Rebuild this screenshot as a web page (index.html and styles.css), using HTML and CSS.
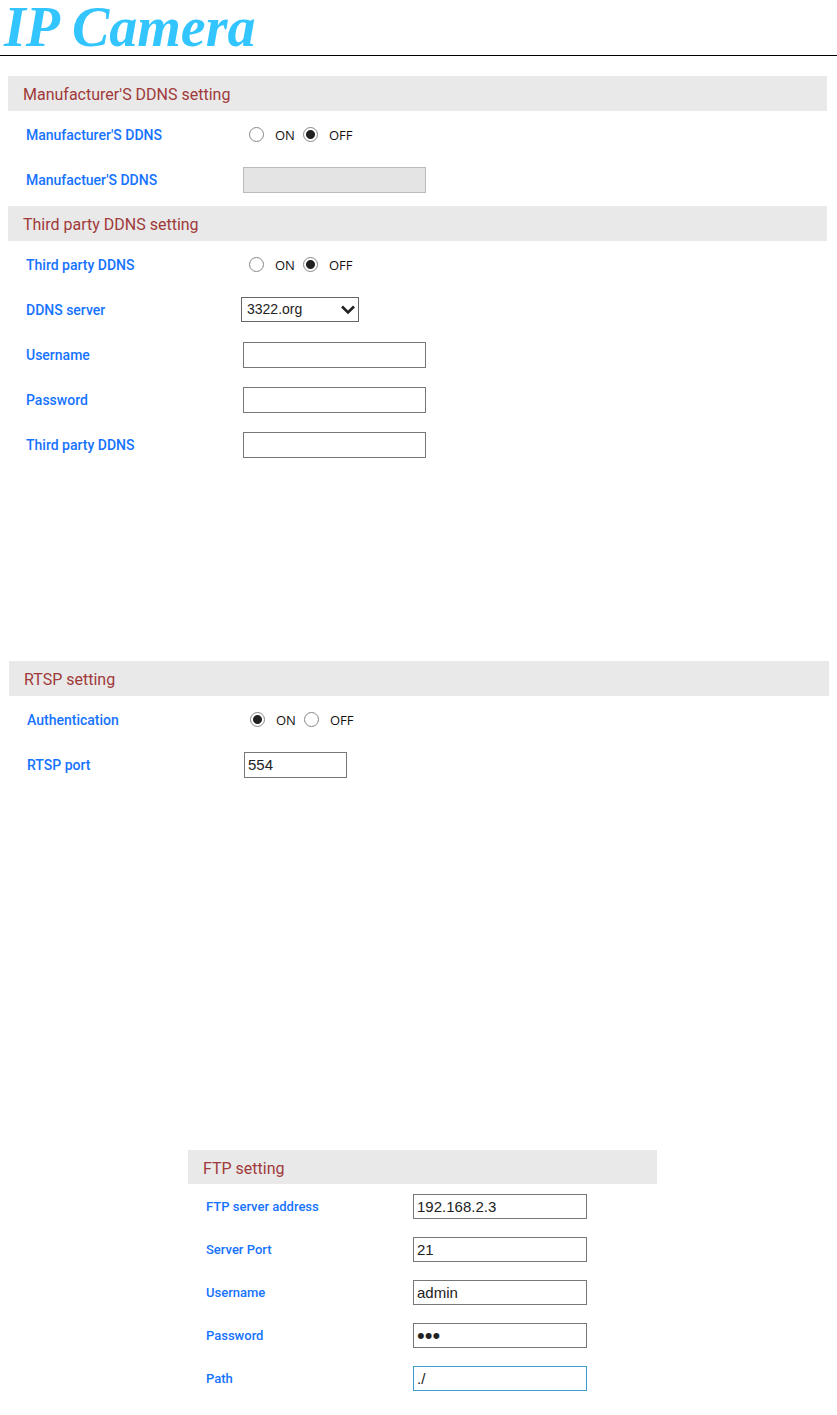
FILE: index.html
```html
<!DOCTYPE html>
<html lang="en">
<head>
    <meta charset="UTF-8">
    <meta name="viewport" content="width=device-width, initial-scale=1.0">
    <title>IP Camera</title>
    <link rel="stylesheet" href="styles.css">
</head>
<body>

<header class="top">
    <div class="logo">IP Camera</div>
</header>

<form class="ddns">
    <section>
        <h2>Manufacturer'S DDNS setting</h2>
        <div class="row" role="radiogroup" aria-labelledby="mddnsLabel">
            <span class="name" id="mddnsLabel">Manufacturer'S DDNS</span>
            <div class="radios">
                <input type="radio" name="mddns" id="mddnsOn"><label for="mddnsOn">ON</label>
                <input type="radio" name="mddns" id="mddnsOff" checked><label for="mddnsOff">OFF</label>
            </div>
        </div>
        <div class="row">
            <label class="name" for="mddnsHost">Manufactuer'S DDNS</label>
            <input type="text" id="mddnsHost" disabled>
        </div>
    </section>

    <section>
        <h2>Third party DDNS setting</h2>
        <div class="row" role="radiogroup" aria-labelledby="tddnsLabel">
            <span class="name" id="tddnsLabel">Third party DDNS</span>
            <div class="radios">
                <input type="radio" name="tddns" id="tddnsOn"><label for="tddnsOn">ON</label>
                <input type="radio" name="tddns" id="tddnsOff" checked><label for="tddnsOff">OFF</label>
            </div>
        </div>
        <div class="row">
            <label class="name" for="ddnsServer">DDNS server</label>
            <div class="select">
                <select id="ddnsServer">
                    <option>3322.org</option>
                </select>
                <svg width="14" height="10" viewBox="0 0 14 10" aria-hidden="true"><path d="M1 1.5 7 7.5 13 1.5" fill="none" stroke="#222" stroke-width="2.6"/></svg>
            </div>
        </div>
        <div class="row">
            <label class="name" for="ddnsUser">Username</label>
            <input type="text" id="ddnsUser">
        </div>
        <div class="row">
            <label class="name" for="ddnsPass">Password</label>
            <input type="password" id="ddnsPass">
        </div>
        <div class="row">
            <label class="name" for="ddnsHost">Third party DDNS</label>
            <input type="text" id="ddnsHost">
        </div>
    </section>
</form>

<form class="rtsp">
    <h2>RTSP setting</h2>
    <div class="row" role="radiogroup" aria-labelledby="authLabel">
        <span class="name" id="authLabel">Authentication</span>
        <div class="radios">
            <input type="radio" name="auth" id="authOn" checked><label for="authOn">ON</label>
            <input type="radio" name="auth" id="authOff"><label for="authOff">OFF</label>
        </div>
    </div>
    <div class="row">
        <label class="name" for="rtspPort">RTSP port</label>
        <input type="text" id="rtspPort" class="port" value="554">
    </div>
</form>

<form class="ftp">
    <h2>FTP setting</h2>
    <div class="row">
        <label class="name" for="ftpServer">FTP server address</label>
        <input type="text" id="ftpServer" value="192.168.2.3">
    </div>
    <div class="row">
        <label class="name" for="ftpPort">Server Port</label>
        <input type="text" id="ftpPort" value="21">
    </div>
    <div class="row">
        <label class="name" for="ftpUser">Username</label>
        <input type="text" id="ftpUser" value="admin">
    </div>
    <div class="row">
        <label class="name" for="ftpPass">Password</label>
        <input type="password" id="ftpPass" value="123">
    </div>
    <div class="row">
        <label class="name" for="ftpPath">Path</label>
        <input type="text" id="ftpPath" class="active" value="./">
    </div>
</form>

</body>
</html>
```
FILE: styles.css
```css
* {
    box-sizing: border-box;
}
body {
    margin: 0;
    background: #fff;
    color: #222;
    font-family: "Liberation Sans", Arial, sans-serif;
    font-size: 14px;
}
.top {
    height: 56px;
    border-bottom: 1px solid #000;
}
.logo {
    padding-left: 4px;
    color: #33c5ff;
    font: italic bold 56px/54px "Liberation Serif", serif;
}
h2 {
    margin: 0 0 1px;
    padding: 1px 15px 0;
    height: 35px;
    line-height: 36px;
    background: #e9e9e9;
    color: #a03a3a;
    font-family: Roboto, sans-serif;
    font-size: 16px;
    font-weight: normal;
}
section {
    margin-bottom: 4px;
}
.ddns {
    margin: 20px 10px 0 8px;
}
.rtsp {
    margin: 194px 8px 0 9px;
}
.ftp {
    width: 56%;
    margin: 363px 0 0 188px;
}
.ftp h2 {
    height: 34px;
}
.row {
    display: flex;
    align-items: center;
    height: 45px;
    padding-left: 18px;
}
.ftp .row {
    height: 43px;
}
.name {
    width: 215px;
    color: #1673ff;
    font-family: Roboto, sans-serif;
    font-size: 14px;
    font-weight: 500;
}
.ftp .name {
    width: 205px;
    font-size: 13px;
}
input[type="text"],
input[type="password"] {
    width: 183px;
    height: 26px;
    margin: 0 0 0 2px;
    padding: 0 3px;
    border: 1px solid #777;
    border-radius: 0;
    background: #fff;
    color: #222;
    font-family: inherit;
    font-size: 15px;
}
input[type="text"]:disabled {
    border-color: #bbb;
    background: #e4e4e4;
}
input[type="text"].port {
    width: 103px;
}
.ftp input[type="text"],
.ftp input[type="password"] {
    width: 174px;
    height: 25px;
}
input[type="password"] {
    font-size: 22px;
}
input[type="text"].active {
    border-color: #3a9fd0;
}
.radios {
    display: flex;
    align-items: center;
    padding-left: 8px;
    color: #111;
    font-family: "Open Sans", sans-serif;
    font-size: 13px;
}
.radios input {
    appearance: none;
    width: 15px;
    height: 15px;
    margin: 0 11px 0 0;
    border: 1px solid #888;
    border-radius: 50%;
    background: #fff;
}
.radios input:checked {
    background: radial-gradient(circle, #222 4px, #fff 5px);
}
.radios label {
    margin-right: 8px;
}
.select {
    position: relative;
    width: 118px;
}
.select select {
    display: block;
    appearance: none;
    width: 100%;
    height: 25px;
    padding: 0 5px 2px;
    border: 1px solid #666;
    border-radius: 0;
    background: #fff;
    color: #222;
    font-family: inherit;
    font-size: 14px;
}
.select svg {
    position: absolute;
    top: 8px;
    right: 4px;
    pointer-events: none;
}
```
